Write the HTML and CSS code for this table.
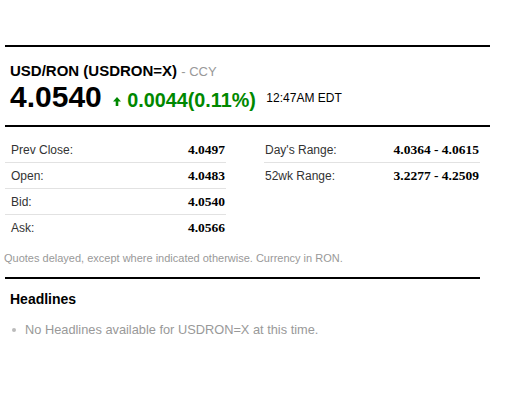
FILE: index.html
```html
<!DOCTYPE html>
<html lang="en">
<head>
    <meta charset="UTF-8">
    <meta name="viewport" content="width=device-width, initial-scale=1.0">
    <title>USD/RON (USDRON=X)</title>
    <link rel="stylesheet" href="styles.css">
</head>
<body>
    <div class="quote">
        <div class="title">USD/RON (USDRON=X) <span class="exchange">- CCY</span></div>
        <div class="price-line">
            <span class="price">4.0540</span>
            <span class="change">
                <svg class="arrow" width="8" height="9" viewBox="0 0 8 9">
                    <path d="M4 0 L8 4.5 L5.3 4.5 L5.3 9 L2.7 9 L2.7 4.5 L0 4.5 Z" fill="#008800"/>
                </svg>0.0044(0.11%)</span>
            <span class="time">12:47AM EDT</span>
        </div>
    </div>

    <div class="stats">
        <div class="stats-col left">
            <div class="row"><span class="label">Prev Close:</span><span class="value">4.0497</span></div>
            <div class="row"><span class="label">Open:</span><span class="value">4.0483</span></div>
            <div class="row"><span class="label">Bid:</span><span class="value">4.0540</span></div>
            <div class="row"><span class="label">Ask:</span><span class="value">4.0566</span></div>
        </div>
        <div class="stats-col right">
            <div class="row"><span class="label">Day's Range:</span><span class="value">4.0364 - 4.0615</span></div>
            <div class="row"><span class="label">52wk Range:</span><span class="value">3.2277 - 4.2509</span></div>
        </div>
    </div>
    <p class="note">Quotes delayed, except where indicated otherwise. Currency in RON.</p>

    <div class="headlines">
        <h2>Headlines</h2>
        <ul>
            <li>No Headlines available for USDRON=X at this time.</li>
        </ul>
    </div>
</body>
</html>
```

FILE: styles.css
```css
body {
    margin: 0;
    font-family: "Liberation Sans", Arial, sans-serif;
    color: #000;
    background: #fff;
}
.quote {
    width: 485px;
    margin: 45px 0 0 5px;
    border-top: 2px solid #000;
    padding-left: 5px;
    box-sizing: border-box;
}
.title {
    padding-top: 15px;
    font-size: 15px;
    font-weight: bold;
    line-height: 18px;
}
.exchange {
    font-size: 13px;
    font-weight: normal;
    color: #999;
}
.price-line {
    line-height: 32px;
    height: 32px;
    white-space: nowrap;
}
.price {
    font-size: 30px;
    font-weight: bold;
    margin-right: 7px;
}
.change {
    font-size: 19.8px;
    font-weight: bold;
    color: #008800;
}
.arrow {
    margin-right: 6px;
    vertical-align: 1px;
}
.time {
    font-size: 12px;
    margin-left: 6px;
    vertical-align: 5px;
}
.stats {
    width: 485px;
    margin: 12px 0 0 5px;
    border-top: 2px solid #000;
    padding-top: 10px;
    display: flex;
    gap: 38px;
}
.stats-col.left {
    width: 221px;
}
.stats-col.right {
    width: 216px;
}
.row {
    display: flex;
    justify-content: space-between;
    align-items: center;
    height: 25px;
    border-bottom: 1px solid #e2e2e2;
    padding: 0 1px 0 6px;
}
.stats-col.right .row {
    padding-left: 1px;
}
.row:last-child {
    border-bottom: none;
}
.label {
    font-size: 12px;
    color: #333;
}
.value {
    font-family: "Liberation Serif", "Times New Roman", serif;
    font-size: 13.5px;
    font-weight: bold;
}
.note {
    margin: 11px 0 0 4px;
    font-size: 11px;
    line-height: 14px;
    color: #999;
}
.headlines {
    width: 475px;
    margin: 12px 0 0 5px;
    border-top: 2px solid #000;
    padding-left: 5px;
    box-sizing: border-box;
}
.headlines h2 {
    margin: 11px 0 0;
    font-size: 14px;
    line-height: 18px;
}
.headlines ul {
    list-style: none;
    margin: 14px 0 0;
    padding: 0;
    color: #999;
    font-size: 12.8px;
    line-height: 16px;
}
.headlines li {
    display: flex;
    align-items: center;
    gap: 9px;
    padding-left: 2px;
}
.headlines li::before {
    content: "";
    width: 4px;
    height: 4px;
    border-radius: 50%;
    background: #bbb;
}
```
